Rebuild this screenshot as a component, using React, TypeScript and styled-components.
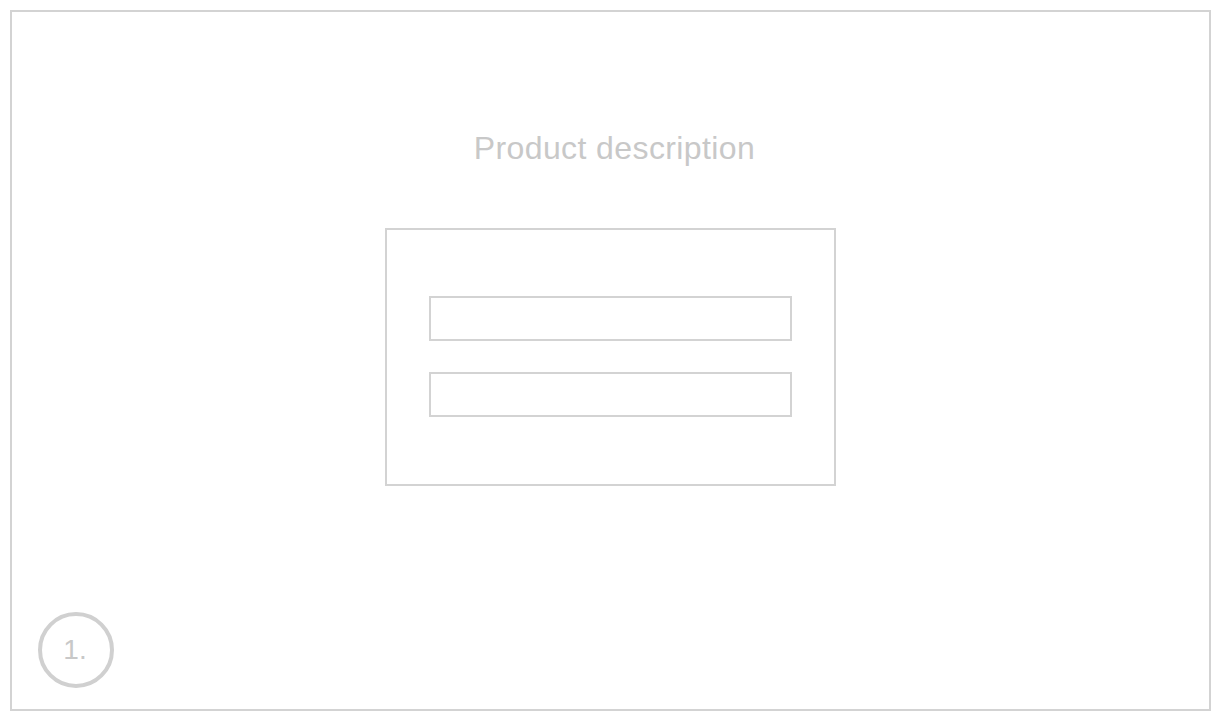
import React from 'react'
import styled, { createGlobalStyle } from 'styled-components'

const GlobalStyle = createGlobalStyle`
  html, body {
    margin: 0;
    padding: 0;
    background: #ffffff;
  }
  body {
    font-family: 'Liberation Sans', Arial, sans-serif;
  }
`

const Page = styled.div`
  width: 1220px;
  height: 720px;
  padding: 10px 9px 9px 10px;
  box-sizing: border-box;
`

const Frame = styled.div`
  height: 100%;
  box-sizing: border-box;
  border: 2px solid #d3d3d3;
  display: flex;
  flex-direction: column;
  align-items: center;
  padding-top: 118px;
`

const Title = styled.h1`
  margin: 0 0 0 8px;
  font-family: 'Liberation Sans', Arial, sans-serif;
  font-weight: 400;
  font-size: 32px;
  line-height: 36px;
  letter-spacing: 0.4px;
  color: #c8c8c8;
`

const Card = styled.div`
  margin: 62px 0 0 -1px;
  width: 451px;
  height: 258px;
  box-sizing: border-box;
  border: 2px solid #d3d3d3;
  padding: 66px 42px 0 42px;
  display: flex;
  flex-direction: column;
  gap: 31px;
`

const Field = styled.div`
  width: 363px;
  height: 45px;
  box-sizing: border-box;
  border: 2px solid #d3d3d3;
`

const Footer = styled.div`
  margin-top: auto;
  align-self: flex-start;
  padding: 0 0 21px 26px;
`

const StepBadge = styled.div`
  width: 76px;
  height: 76px;
  box-sizing: border-box;
  border: 4px solid #d0d0d0;
  border-radius: 50%;
  display: flex;
  align-items: center;
  justify-content: center;
  padding-right: 2px;
  font-size: 28px;
  color: #c8c8c8;
`

export default function App() {
  return (
    <>
      <GlobalStyle />
      <Page>
        <Frame>
          <Title>Product description</Title>
          <Card>
            <Field />
            <Field />
          </Card>
          <Footer>
            <StepBadge>1.</StepBadge>
          </Footer>
        </Frame>
      </Page>
    </>
  )
}
